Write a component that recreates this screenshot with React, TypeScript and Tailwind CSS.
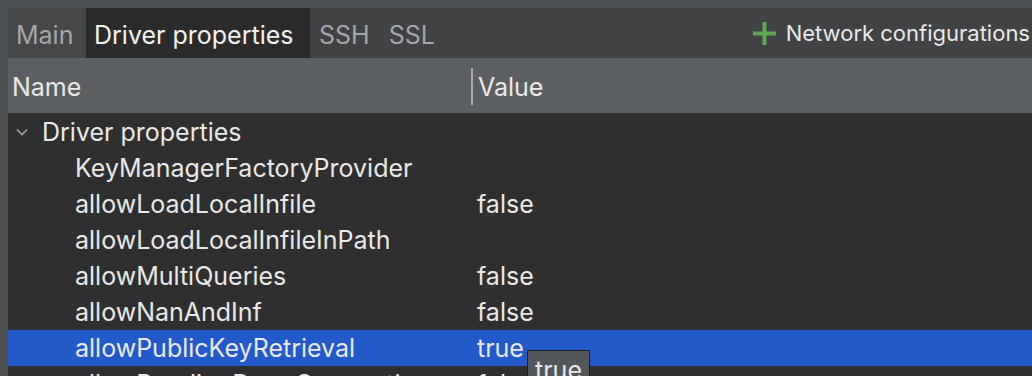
import React from "react";

const rows: [string, string][] = [
  ["KeyManagerFactoryProvider", ""],
  ["allowLoadLocalInfile", "false"],
  ["allowLoadLocalInfileInPath", ""],
  ["allowMultiQueries", "false"],
  ["allowNanAndInf", "false"],
  ["allowPublicKeyRetrieval", "true"],
  ["allowReadingDeepConnection", "false"],
];

export default function App() {
  return (
    <div
      className="w-[1032px] h-[376px] overflow-hidden bg-[#4c4f52] pl-[8px] pt-[8px] text-[25px] leading-[32px] text-[#e8e8e8]"
      style={{ fontFamily: "Inter, 'Noto Sans', sans-serif" }}
    >
      <div className="flex flex-col h-full bg-[#2f2f2f]">
        {/* tab bar */}
        <div className="flex items-stretch h-[50px] bg-[#414244] shrink-0 whitespace-nowrap">
          <div className="flex items-center pt-[3px] px-[8px] w-[78px] bg-[#464749] text-[#a5a6a8]">Main</div>
          <div className="flex items-center pt-[3px] px-[8px] w-[224px] bg-[#2b2b2b] text-[#f2f2f2]">Driver properties</div>
          <div className="flex items-center pt-[3px] pl-[9px] text-[#a5a6a8]">SSH</div>
          <div className="flex items-center pt-[3px] pl-[19px] text-[#a5a6a8]">SSL</div>
          <div className="flex-1" />
          <div className="flex items-center gap-[9px] pr-[2px] text-[22px] text-[#e8e8e8]">
            <svg width="25" height="25" viewBox="0 0 25 25">
              <rect x="10.5" y="1" width="4" height="23" fill="#5fa84f" />
              <rect x="1" y="10.5" width="23" height="4" fill="#5fa84f" />
            </svg>
            <span>Network configurations</span>
          </div>
        </div>
        {/* header */}
        <div className="flex items-center h-[56px] bg-[#5d6062] shrink-0 border-b border-[#3a3b3c]">
          <div className="w-[463px] pl-[4px] pt-[3px]">Name</div>
          <div className="w-[2px] h-[37px] bg-[#a8aaab] mt-[2px]" />
          <div className="pl-[5px] pt-[3px]">Value</div>
        </div>
        {/* tree */}
        <div className="relative flex flex-col">
          <div className="flex items-center h-[36px]">
            <svg className="ml-[7px] mr-[13px]" width="14" height="14" viewBox="0 0 14 14">
              <path d="M2 4.5 L7 9.5 L12 4.5" stroke="#a5a6a8" strokeWidth="1.6" fill="none" />
            </svg>
            <span>Driver properties</span>
          </div>
          {rows.map(([n, v], i) => (
            <div
              key={n}
              className={
                "flex items-center h-[36px] whitespace-nowrap " + (i === 5 ? "bg-[#2459c9]" : "")
              }
            >
              <div className="w-[465px] pl-[67px] overflow-hidden">{n}</div>
              <div className="pl-[4px]">{v}</div>
            </div>
          ))}
          <div className="absolute left-[519px] top-[236px] w-[63px] h-[40px] bg-[#54575a] border border-[#1e1e1e] flex justify-center pt-[3px]">
            true
          </div>
        </div>
      </div>
    </div>
  );
}
